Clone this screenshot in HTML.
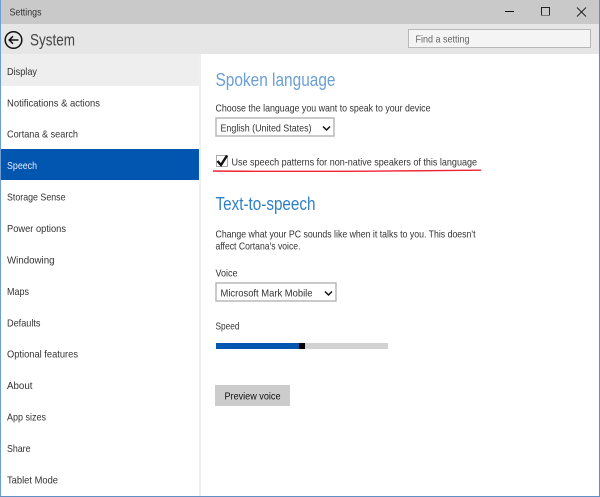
<!DOCTYPE html>
<html><head><meta charset="utf-8"><style>
html,body{margin:0;padding:0;background:#fff}
svg{display:block}
text{font-family:"Liberation Sans",sans-serif;font-size:10.4px;fill:#333}
</style></head><body>
<svg width="600" height="497" viewBox="0 0 600 497" xmlns="http://www.w3.org/2000/svg">
<rect width="600" height="497" fill="#fff"/>
<rect width="600" height="24" fill="#c9c9c9"/>
<rect y="24" width="600" height="30" fill="#e6e6e6"/>
<rect y="54" width="200" height="32" fill="#eeeeee"/>
<rect y="149" width="200" height="31" fill="#0256b0"/>
<rect x="199" y="54" width="2" height="443" fill="#f0f0f0"/>
<rect x="0" y="0" width="1" height="497" fill="#6d9fd6"/>
<rect x="599" y="0" width="1" height="497" fill="#5f8fc4"/>
<rect x="0" y="496" width="600" height="1" fill="#5f8fc4"/>

<text x="9.5" y="15.500" textLength="32" lengthAdjust="spacingAndGlyphs" style="font-size:10px">Settings</text>
<rect x="505" y="11" width="9" height="1" fill="#111"/>
<rect x="541.5" y="7.5" width="8" height="8" fill="none" stroke="#222" stroke-width="1"/>
<rect x="541" y="15" width="9" height="1" fill="#777"/>
<path d="M577 7.5L586 16.5M586 7.5L577 16.5" stroke="#222" stroke-width="1" fill="none"/>

<circle cx="13.5" cy="40" r="8.3" fill="none" stroke="#111" stroke-width="1.5"/>
<path d="M18.5 40H9.5M13 36.3L9.2 40L13 43.7" fill="none" stroke="#111" stroke-width="1.5"/>
<text x="30" y="45.500" textLength="45" lengthAdjust="spacingAndGlyphs" style="font-size:16.500px;fill:#444">System</text>

<rect x="408.5" y="29.5" width="182" height="18" fill="#f4f4f4" stroke="#b8b8b8" stroke-width="1"/>
<text x="415.5" y="42.300" textLength="54" lengthAdjust="spacingAndGlyphs" style="fill:#666">Find a setting</text>

<g>
<text x="7" y="74.800" textLength="30" lengthAdjust="spacingAndGlyphs">Display</text>
<text x="7" y="106.300" textLength="93" lengthAdjust="spacingAndGlyphs">Notifications &amp; actions</text>
<text x="7" y="137.300" textLength="71" lengthAdjust="spacingAndGlyphs">Cortana &amp; search</text>
<text x="7" y="168.800" textLength="30" lengthAdjust="spacingAndGlyphs" style="fill:#e8eef8">Speech</text>
<text x="7" y="200.300" textLength="58.500" lengthAdjust="spacingAndGlyphs">Storage Sense</text>
<text x="7" y="231.800" textLength="59" lengthAdjust="spacingAndGlyphs">Power options</text>
<text x="7" y="263.300" textLength="47.500" lengthAdjust="spacingAndGlyphs">Windowing</text>
<text x="7" y="294.800" textLength="22" lengthAdjust="spacingAndGlyphs">Maps</text>
<text x="7" y="326.300" textLength="33.500" lengthAdjust="spacingAndGlyphs">Defaults</text>
<text x="7" y="357.300" textLength="71" lengthAdjust="spacingAndGlyphs">Optional features</text>
<text x="7" y="388.800" textLength="25.500" lengthAdjust="spacingAndGlyphs">About</text>
<text x="7" y="420.300" textLength="39" lengthAdjust="spacingAndGlyphs">App sizes</text>
<text x="7" y="451.800" textLength="23.500" lengthAdjust="spacingAndGlyphs">Share</text>
<text x="7" y="483.300" textLength="51" lengthAdjust="spacingAndGlyphs">Tablet Mode</text>
</g>

<text x="215.500" y="86" textLength="120" lengthAdjust="spacingAndGlyphs" style="font-size:18.500px;fill:#6a9fd6">Spoken language</text>
<text x="215.500" y="111.300" textLength="215" lengthAdjust="spacingAndGlyphs">Choose the language you want to speak to your device</text>
<rect x="216" y="118" width="118" height="18" fill="#fff" stroke="#b8b8b8" stroke-width="1.500"/>
<text x="220.500" y="131.300" textLength="91" lengthAdjust="spacingAndGlyphs">English (United States)</text>
<path d="M323 126.500L326.500 130L330 126.500" fill="none" stroke="#111" stroke-width="1.500"/>

<rect x="216.500" y="155.500" width="11" height="11" fill="#fff" stroke="#aaa" stroke-width="1"/>
<path d="M217.500 161L221 165L227 155.500" fill="none" stroke="#111" stroke-width="2.400"/>
<text x="231.500" y="165.300" textLength="245.500" lengthAdjust="spacingAndGlyphs">Use speech patterns for non-native speakers of this language</text>
<path d="M213 171C300 172 400 171 481 170.200" fill="none" stroke="#ee2233" stroke-width="1.400"/>

<text x="215.500" y="210" textLength="100" lengthAdjust="spacingAndGlyphs" style="font-size:18.500px;fill:#2f80c8">Text-to-speech</text>
<text x="215.500" y="237.300" textLength="260" lengthAdjust="spacingAndGlyphs">Change what your PC sounds like when it talks to you. This doesn't</text>
<text x="215.500" y="249.300" textLength="85" lengthAdjust="spacingAndGlyphs">affect Cortana's voice.</text>
<text x="215.500" y="276.300" textLength="22" lengthAdjust="spacingAndGlyphs">Voice</text>
<rect x="216" y="283" width="120" height="18" fill="#fff" stroke="#b8b8b8" stroke-width="1.500"/>
<text x="220.500" y="296.300" textLength="92" lengthAdjust="spacingAndGlyphs">Microsoft Mark Mobile</text>
<path d="M325 291.500L328.500 295L332 291.500" fill="none" stroke="#111" stroke-width="1.500"/>
<text x="215.500" y="329.300" textLength="24" lengthAdjust="spacingAndGlyphs">Speed</text>

<rect x="216" y="343" width="172" height="6" fill="#d2d2d2"/>
<rect x="216" y="343" width="83" height="6" fill="#0256b0"/>
<rect x="299" y="343" width="6" height="6" fill="#000"/>

<rect x="215" y="385" width="75" height="21" fill="#cccccc"/>
<text x="224.500" y="399.300" textLength="56" lengthAdjust="spacingAndGlyphs" style="fill:#111">Preview voice</text>
</svg>
</body></html>
